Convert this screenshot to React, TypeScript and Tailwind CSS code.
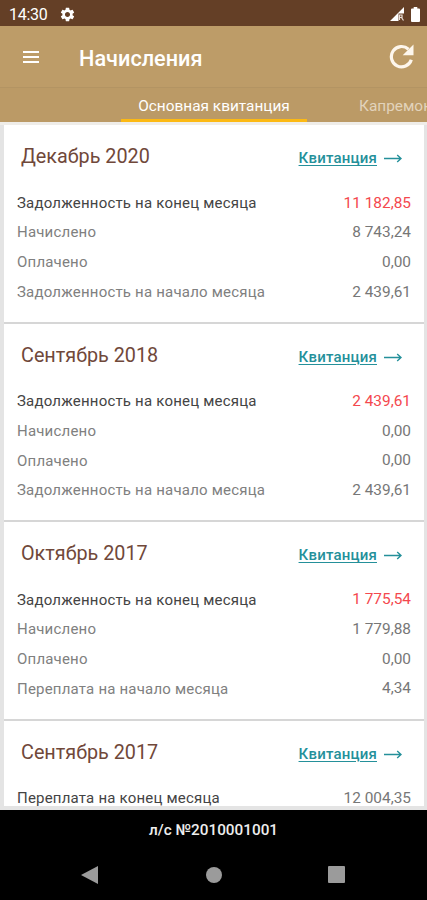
import React from 'react';
import clsx from 'clsx';

interface Row {
  label: string;
  value: string;
  debt?: boolean;
}

interface Month {
  title: string;
  rows: Row[];
}

const months: Month[] = [
  {
    title: 'Декабрь 2020',
    rows: [
      { label: 'Задолженность на конец месяца', value: '11 182,85', debt: true },
      { label: 'Начислено', value: '8 743,24' },
      { label: 'Оплачено', value: '0,00' },
      { label: 'Задолженность на начало месяца', value: '2 439,61' },
    ],
  },
  {
    title: 'Сентябрь 2018',
    rows: [
      { label: 'Задолженность на конец месяца', value: '2 439,61', debt: true },
      { label: 'Начислено', value: '0,00' },
      { label: 'Оплачено', value: '0,00' },
      { label: 'Задолженность на начало месяца', value: '2 439,61' },
    ],
  },
  {
    title: 'Октябрь 2017',
    rows: [
      { label: 'Задолженность на конец месяца', value: '1 775,54', debt: true },
      { label: 'Начислено', value: '1 779,88' },
      { label: 'Оплачено', value: '0,00' },
      { label: 'Переплата на начало месяца', value: '4,34' },
    ],
  },
  {
    title: 'Сентябрь 2017',
    rows: [{ label: 'Переплата на конец месяца', value: '12 004,35' }],
  },
];

function StatusBar() {
  return (
    <div className="flex h-[26px] shrink-0 items-center bg-[#643f26] pt-[3px] pl-[9px] pr-[7px] text-white">
      <span className="text-[16px] leading-none tracking-[-0.3px]">14:30</span>
      <svg className="ml-3 -mt-px h-[17px] w-[17px]" viewBox="0 0 24 24" fill="currentColor">
        <path d="M19.14 12.94c.04-.3.06-.61.06-.94 0-.32-.02-.64-.07-.94l2.03-1.58a.49.49 0 0 0 .12-.61l-1.92-3.32a.488.488 0 0 0-.59-.22l-2.39.96c-.5-.38-1.03-.7-1.62-.94l-.36-2.54a.484.484 0 0 0-.48-.41h-3.84c-.24 0-.43.17-.47.41l-.36 2.54c-.59.24-1.13.57-1.62.94l-2.39-.96c-.22-.08-.47 0-.59.22L2.74 8.87c-.12.21-.08.47.12.61l2.03 1.58c-.05.3-.09.63-.09.94s.02.64.07.94l-2.03 1.58a.49.49 0 0 0-.12.61l1.92 3.32c.12.22.37.29.59.22l2.39-.96c.5.38 1.03.7 1.62.94l.36 2.54c.05.24.24.41.48.41h3.84c.24 0 .44-.17.47-.41l.36-2.54c.59-.24 1.13-.56 1.62-.94l2.39.96c.22.08.47 0 .59-.22l1.92-3.32c.12-.22.07-.47-.12-.61l-2.01-1.58zM12 15.6c-1.98 0-3.6-1.62-3.6-3.6s1.62-3.6 3.6-3.6 3.6 1.62 3.6 3.6-1.62 3.6-3.6 3.6z" />
      </svg>
      <svg className="ml-auto -mt-px h-[14px] w-[15px]" viewBox="0 0 15 14">
        <path d="M0 14 14 0v6.500H8.500V14z" fill="#fff" />
        <path d="M9.500 13V8h2.500v2.500H9.500M11.500 10.500l2 3" stroke="#eadfd8" strokeWidth="1.200" fill="none" />
      </svg>
      <svg className="ml-1.5 -mt-px h-[15px] w-[9px]" viewBox="0 0 9 15" fill="currentColor">
        <path d="M2.7 0h3.6v1.5H8a1 1 0 0 1 1 1V14a1 1 0 0 1-1 1H1a1 1 0 0 1-1-1V2.500a1 1 0 0 1 1-1h1.700z" />
      </svg>
    </div>
  );
}

function Toolbar() {
  return (
    <header className="flex h-[62px] shrink-0 items-center border-b border-[#b39463] bg-[#bd9c68] pl-[23px] pr-[13px] text-white">
      <svg className="h-[12px] w-4" viewBox="0 0 16 12" stroke="#fff" strokeWidth="1.8">
        <path d="M0 1h16M0 6h16M0 11h16" />
      </svg>
      <h1 className="ml-10 mt-[4px] text-[21.7px] font-medium leading-none">Начисления</h1>
      <svg className="ml-auto h-[25px] w-[25px]" viewBox="0 0 25 25" fill="none">
        <path d="M22.300 15.800A10.200 10.200 0 1 1 19.500 5.200" stroke="#fdf6ec" strokeWidth="3.200" />
        <path d="M24.500 .5v10.800H13.700z" fill="#fdf6ec" />
      </svg>
    </header>
  );
}

function Tabs() {
  return (
    <nav className="flex h-[34px] shrink-0 overflow-hidden bg-[#bb9a66] pl-[121px] text-[15.4px] leading-none whitespace-nowrap">
      <div className="w-[186px] shrink-0 border-b-[3px] border-[#fcb913] pt-[11px] text-center text-white">
        Основная квитанция
      </div>
      <div className="ml-[52px] shrink-0 pt-[11px] text-[#e2d3bb]">Капремонт</div>
    </nav>
  );
}

function MonthCard({ month }: { month: Month }) {
  return (
    <section className="h-[198.4px] shrink-0 border-b-2 border-[#d6d6d6] bg-white pt-px pl-[13px] pr-[13px]">
      <div className="flex h-[62px] items-center justify-between pl-1 pr-[9px]">
        <h2 className="text-[19.8px] leading-none text-[#70483a]">{month.title}</h2>
        <a className="mt-[3px] flex items-center text-[#24909a]">
          <span className="text-[15px] font-medium leading-none tracking-[0.2px] underline decoration-1 underline-offset-2">
            Квитанция
          </span>
          <svg className="ml-[7px] h-[9px] w-[18px]" viewBox="0 0 18 9" fill="none" stroke="currentColor" strokeWidth="1.400">
            <path d="M0 4.500h17M13.200 1l3.800 3.500-3.800 3.500" />
          </svg>
        </a>
      </div>
      {month.rows.map((row, i) => (
        <div
          key={row.label}
          className="flex h-[29.7px] items-center justify-between text-[15px] leading-none tracking-[0.2px] text-[#808080]"
        >
          <span className={clsx(i === 0 && 'text-[#444]')}>{row.label}</span>
          <span className={clsx('text-[15.4px] tracking-normal', row.debt ? 'text-[#f4484e]' : 'text-[#777]')}>
            {row.value}
          </span>
        </div>
      ))}
    </section>
  );
}

function BottomBar() {
  return (
    <footer className="h-[90px] shrink-0 bg-black">
      <div className="pt-[13px] text-center text-[15.300px] font-medium leading-none text-[#eee]">л/с №2010001001</div>
      <div className="mt-[28px] flex h-[17px] items-center pl-[81px] text-[#9b9b9b]">
        <svg className="h-[18px] w-[17px]" viewBox="0 0 17 18" fill="currentColor">
          <path d="M0 9 17 0v18z" />
        </svg>
        <div className="ml-[108px] h-4 w-4 rounded-full bg-[#9b9b9b]" />
        <div className="ml-[106px] h-[17px] w-[17px] rounded-[1px] bg-[#9b9b9b]" />
      </div>
    </footer>
  );
}

export default function App() {
  return (
    <div className="flex h-[900px] w-[427px] flex-col overflow-hidden font-['Roboto',sans-serif]">
      <StatusBar />
      <Toolbar />
      <Tabs />
      <main className="flex min-h-0 flex-1 flex-col border-t-[3px] border-[#efede9] bg-[#e4e4e4] pl-1 pr-[3px] pb-[4px]">
        <div className="flex min-h-0 flex-1 flex-col overflow-hidden pt-[0.4px]">
          {months.map((month) => (
            <MonthCard key={month.title} month={month} />
          ))}
        </div>
      </main>
      <BottomBar />
    </div>
  );
}
